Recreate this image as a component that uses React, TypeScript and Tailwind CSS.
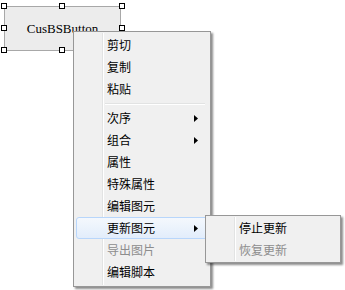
const items: { label: string; sub?: boolean; active?: boolean; disabled?: boolean; sep?: boolean }[] = [
  { label: "剪切" },
  { label: "复制" },
  { label: "粘贴" },
  { label: "", sep: true },
  { label: "次序", sub: true },
  { label: "组合", sub: true },
  { label: "属性" },
  { label: "特殊属性" },
  { label: "编辑图元" },
  { label: "更新图元", sub: true, active: true },
  { label: "导出图片", disabled: true },
  { label: "编辑脚本" },
];

const subItems = [
  { label: "停止更新" },
  { label: "恢复更新", disabled: true },
];

function Handle({ className }: { className: string }) {
  return <span className={`absolute w-[6px] h-[6px] border border-black bg-white ${className}`} />;
}

function Arrow() {
  return (
    <svg width="4" height="7" viewBox="0 0 4 7" className="mr-[9px]">
      <path d="M0 0 L4 3.5 L0 7 Z" fill="#000" />
    </svg>
  );
}

function MenuRow({ label, sub, active, disabled }: { label: string; sub?: boolean; active?: boolean; disabled?: boolean }) {
  return (
    <div
      className={`h-[22px] flex items-center justify-between mx-px rounded-[3px] border ${
        active
          ? "border-[#b8d6fb] bg-gradient-to-b from-[#f4f8fd] to-[#e2edfb]"
          : "border-transparent"
      }`}
    >
      <span className={`pl-[30px] ${disabled ? "text-[#8d8d8d]" : "text-black"}`}>{label}</span>
      {sub && <Arrow />}
    </div>
  );
}

export default function App() {
  return (
    <div
      className="relative w-[345px] h-[290px] bg-white overflow-hidden text-[12px] leading-none"
      style={{ fontFamily: '"Noto Sans CJK SC", "Noto Sans", sans-serif' }}
    >
      {/* selected control */}
      <div className="relative ml-[4px] mt-[6px] w-[117px] h-[45px]">
        <div className="w-full h-full bg-[#ececec] border border-[#a8a8a8] flex items-center justify-center">
          <span className="text-[13px] text-black pb-[1px]" style={{ fontFamily: '"Liberation Serif", serif' }}>
            CusBSButton
          </span>
        </div>
        <Handle className="left-[-3px] top-[-3px]" />
        <Handle className="left-[55px] top-[-3px]" />
        <Handle className="left-[115px] top-[-3px]" />
        <Handle className="left-[-3px] top-[19px]" />
        <Handle className="left-[115px] top-[19px]" />
        <Handle className="left-[-3px] top-[41px]" />
        <Handle className="left-[55px] top-[41px]" />
        <Handle className="left-[115px] top-[41px]" />
      </div>

      {/* context menu */}
      <div className="absolute left-[73px] top-[31px] w-[138px] h-[256px] bg-[#f0f0f0] border border-[#979797] shadow-[2px_2px_2px_rgba(0,0,0,0.45)] p-px">
        <div className="absolute left-[28px] top-px bottom-px w-px bg-[#e2e3e3]" />
        <div className="absolute left-[29px] top-px bottom-px w-px bg-white" />
        <div className="relative pt-px">
          {items.map((it, i) =>
            it.sep ? (
              <div key={i} className="h-[7px] flex flex-col justify-center pl-[30px] pr-[4px]">
                <div className="h-px bg-[#e2e3e3]" />
                <div className="h-px bg-white" />
              </div>
            ) : (
              <MenuRow key={i} {...it} />
            )
          )}
        </div>
      </div>

      {/* submenu */}
      <div className="absolute left-[205px] top-[215px] w-[136px] h-[48px] bg-[#f0f0f0] border border-[#979797] shadow-[2px_2px_2px_rgba(0,0,0,0.45)] p-px">
        <div className="absolute left-[28px] top-px bottom-px w-px bg-[#e2e3e3]" />
        <div className="absolute left-[29px] top-px bottom-px w-px bg-white" />
        <div className="relative">
          {subItems.map((it) => (
            <MenuRow key={it.label} {...it} />
          ))}
        </div>
      </div>
    </div>
  );
}
